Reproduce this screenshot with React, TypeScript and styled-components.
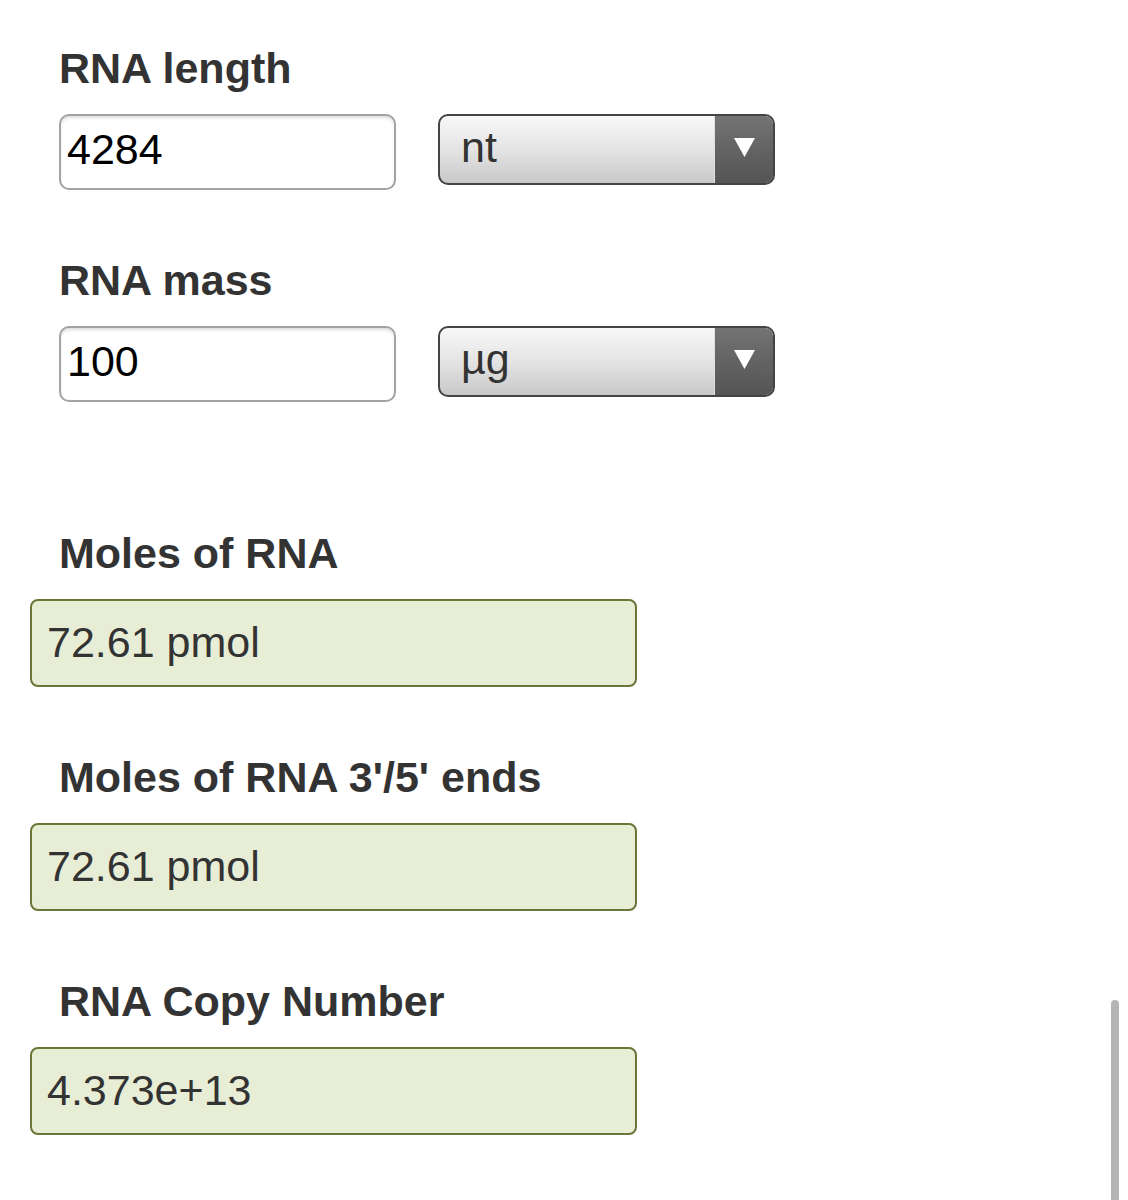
import React from 'react'
import styled, { createGlobalStyle } from 'styled-components'

const GlobalStyle = createGlobalStyle`
    html, body {
        margin: 0;
        padding: 0;
        background: #fff;
    }
    body {
        font-family: 'Liberation Sans', Arial, Helvetica, sans-serif;
        color: #333;
    }
`

type InputFieldProps = {
    label: string
    value: string
    unit: string
}

type ResultProps = {
    label: string
    value: string
}

const InputField = (props: InputFieldProps) => {
    return (
        <Field>
            <Label>{props.label}</Label>
            <Row>
                <TextBox defaultValue={props.value} />
                <Select>
                    <SelectValue>{props.unit}</SelectValue>
                    <SelectArrow>
                        <svg width="21" height="19" viewBox="0 0 21 19">
                            <polygon points="0,0 21,0 10.5,19" fill="#fff" />
                        </svg>
                    </SelectArrow>
                </Select>
            </Row>
        </Field>
    )
}

const Result = (props: ResultProps) => {
    return (
        <Field>
            <Label>{props.label}</Label>
            <Output>{props.value}</Output>
        </Field>
    )
}

export default function App() {
    return (
        <>
            <GlobalStyle />
            <Page>
                <Inputs>
                    <InputField label="RNA length" value="4284" unit="nt" />
                    <InputField label="RNA mass" value="100" unit="µg" />
                </Inputs>
                <Results>
                    <Result label="Moles of RNA" value="72.61 pmol" />
                    <Result label="Moles of RNA 3'/5' ends" value="72.61 pmol" />
                    <Result label="RNA Copy Number" value="4.373e+13" />
                </Results>
                <ScrollThumb />
            </Page>
        </>
    )
}

const Page = styled.div`
    position: relative;
    min-height: 1200px;
    overflow: hidden;
    padding-top: 43px;
    box-sizing: border-box;
`

const Inputs = styled.div`
    display: flex;
    flex-direction: column;
    gap: 65px;
    padding-left: 59px;
`

const Results = styled.div`
    display: flex;
    flex-direction: column;
    gap: 65px;
    margin-top: 126px;
    padding-left: 30px;
    width: 607px;
`

const Field = styled.div`
    display: flex;
    flex-direction: column;
    gap: 21px;
`

const Label = styled.div`
    font-size: 43px;
    line-height: 50px;
    font-weight: 700;
    color: #333;
    height: 50px;
    white-space: nowrap;
    ${Results} & {
        padding-left: 29px;
    }
`

const Row = styled.div`
    display: flex;
    align-items: flex-start;
    gap: 42px;
`

const TextBox = styled.input`
    width: 337px;
    height: 76px;
    box-sizing: border-box;
    border: 2px solid #a3a3a3;
    border-radius: 10px;
    padding: 0 6px 5px;
    font-family: 'Liberation Sans', Arial, sans-serif;
    font-size: 43px;
    color: #000;
    background: #fff;
    box-shadow: inset 0 3px 4px -2px rgba(0, 0, 0, 0.2);
    outline: none;
`

const Select = styled.div`
    display: flex;
    width: 337px;
    height: 71px;
    box-sizing: border-box;
    border: 2px solid #444;
    border-radius: 10px;
    overflow: hidden;
    background: linear-gradient(to bottom, #f8f8f8 0%, #e4e4e4 50%, #c8c8c8 100%);
`

const SelectValue = styled.div`
    flex: 1;
    display: flex;
    align-items: center;
    padding-left: 21px;
    padding-bottom: 4px;
    font-size: 43px;
    color: #333;
`

const SelectArrow = styled.div`
    width: 59px;
    display: flex;
    align-items: center;
    justify-content: center;
    border-left: 1px solid #e0e0e0;
    background: linear-gradient(to bottom, #747474 0%, #636363 50%, #555 100%);
    padding-bottom: 4px;
    box-sizing: border-box;
`

const Output = styled.div`
    height: 88px;
    box-sizing: border-box;
    border: 2px solid #6a7538;
    border-radius: 8px;
    background: #e8eed6;
    display: flex;
    align-items: center;
    padding-left: 15px;
    padding-bottom: 2px;
    font-size: 43px;
    color: #333;
`

const ScrollThumb = styled.div`
    position: absolute;
    top: 1000px;
    right: 9px;
    width: 8px;
    height: 220px;
    border-radius: 4px;
    background: #b4b4b4;
`
